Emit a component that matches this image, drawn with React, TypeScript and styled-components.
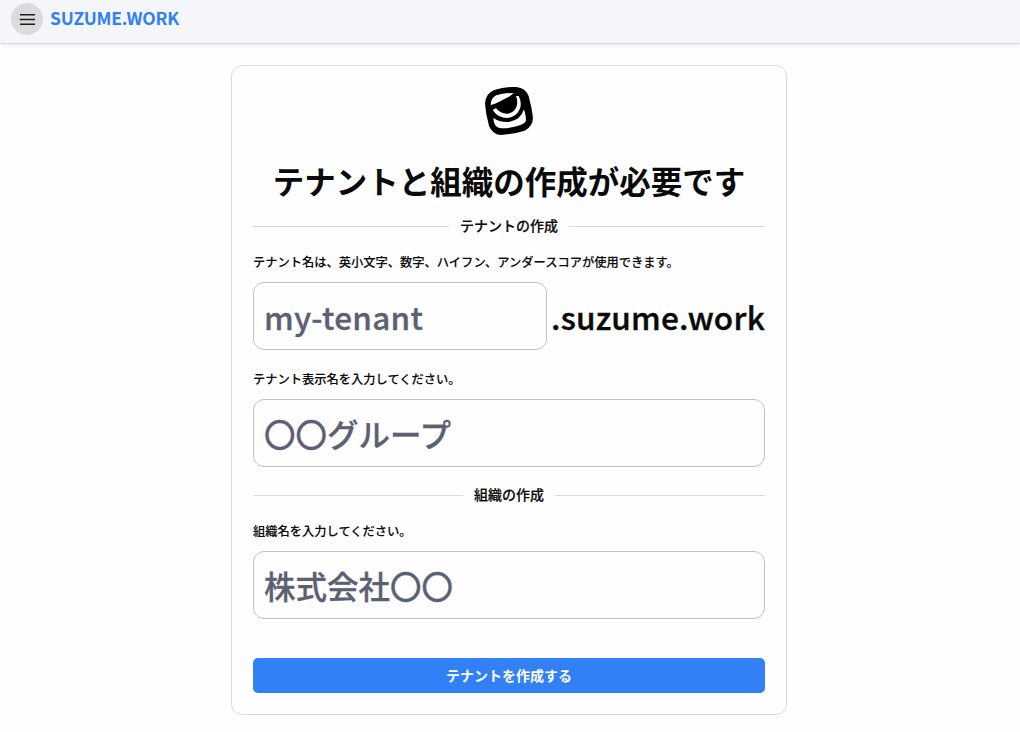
import React from "react";
import styled, { createGlobalStyle } from "styled-components";

const GlobalStyle = createGlobalStyle`
  *, *::before, *::after { box-sizing: border-box; }
  body {
    margin: 0;
    background: #fefefe;
    color: #0a0a0a;
    font-family: "Noto Sans CJK JP", "Noto Sans", sans-serif;
    font-size: 14px;
    font-weight: 500;
  }
`;

const Header = styled.header`
  height: 44px;
  padding: 0 11px 6px;
  display: flex;
  align-items: center;
  gap: 7px;
  background: #f5f6fa;
  border-bottom: 1px solid #d9dadc;
  box-shadow: 0 1px 5px rgba(0, 0, 0, 0.09);
`;

const MenuButton = styled.button`
  width: 32px;
  height: 32px;
  padding: 0;
  border: 0;
  border-radius: 50%;
  background: #dadbdd;
  display: grid;
  place-items: center;
`;

const Brand = styled.span`
  padding-bottom: 1px;
  color: #3180f6;
  font-size: 17.5px;
  line-height: 26px;
  font-weight: 700;
  letter-spacing: -0.25px;
`;

const Main = styled.main`
  display: flex;
  justify-content: center;
  padding: 21px 2px 17px 0;
`;

const Card = styled.form`
  width: 556px;
  height: 650px;
  padding: 21px;
  display: flex;
  flex-direction: column;
  border: 1px solid #dbdbdb;
  border-radius: 11px;
`;

const Logo = styled.svg`
  width: 48px;
  height: 48px;
  align-self: center;
  flex: none;
`;

const Title = styled.h1`
  margin: 21px 0 0;
  font-size: 31.5px;
  line-height: 48px;
  font-weight: 700;
  text-align: center;
  white-space: nowrap;
`;

const Divider = styled.div<{ $top: number }>`
  margin-top: ${(p) => p.$top}px;
  height: 20px;
  display: flex;
  align-items: center;
  gap: 11px;

  &::before,
  &::after {
    content: "";
    flex: 1;
    height: 1px;
    background: #dcdcdc;
  }
`;

const DividerText = styled.span`
  padding-bottom: 2px;
  line-height: 20px;
  -webkit-text-stroke: 0.2px currentColor;
`;

const Hint = styled.label<{ $top: number }>`
  margin-top: ${(p) => p.$top}px;
  font-size: 12.25px;
  line-height: 18px;
  -webkit-text-stroke: 0.12px currentColor;
`;

const InputRow = styled.div`
  margin-top: 11px;
  display: flex;
  align-items: center;
  gap: 4px;
`;

const Input = styled.input`
  flex: 1;
  min-width: 0;
  height: 68px;
  padding: 0 10px 1px;
  border: 1px solid #c2c2c4;
  border-radius: 11px;
  outline: none;
  background: #fefefe;
  font: inherit;
  font-size: 31.5px;

  &::placeholder {
    color: #5b6173;
    opacity: 1;
    -webkit-text-stroke: 0.3px currentColor;
  }

  &[name="tenant"] {
    letter-spacing: 0.25px;
  }
`;

const Suffix = styled.span`
  font-size: 31.5px;
  line-height: 46px;
  letter-spacing: 0.25px;
  -webkit-text-stroke: 0.4px currentColor;
`;

const Submit = styled.button`
  margin-top: 39px;
  height: 35px;
  padding: 0 0 2px;
  border: 0;
  border-radius: 5px;
  background: #3180f6;
  color: #fff;
  font: inherit;
  font-weight: 700;
`;

export default function App() {
  return (
    <>
      <GlobalStyle />
      <Header>
        <MenuButton type="button" aria-label="menu">
          <svg width="16" height="12" viewBox="0 0 16 12" stroke="#1c1c1e" strokeWidth="1.4">
            <path d="M1 1.8h15M.7 6.5H16M1 11.2h15" />
          </svg>
        </MenuButton>
        <Brand>SUZUME.WORK</Brand>
      </Header>
      <Main>
        <Card>
          <Logo viewBox="0 0 144 144" aria-hidden="true">
            <path d="M28 9 Q60 -1 94 0 Q122 3 131 28 Q140 58 144 93 Q143 119 119 131 Q83 142 47 144 Q21 141 12 116 Q2 83 0 49 Q3 18 28 9Z" />
            <path fill="#fefefe" d="M17 54 Q18 32 34 25 Q53 18 86 18 Q73 31 57 37 Q39 47 28 51Z" />
            <path fill="#fefefe" d="M93 27 L101 27 Q112 48 104 67 Q93 91 67 93 Q39 93 23 69 L33 64 Q49 82 69 80 Q87 77 94 60 Q100 44 93 27Z" />
            <path fill="#fefefe" d="M25 93 Q45 107 72 105 Q107 99 117 67 Q125 94 122 103 Q117 114 85 120 Q58 126 43 123 Q26 118 25 93Z" />
          </Logo>
          <Title>テナントと組織の作成が必要です</Title>
          <Divider $top={12}>
            <DividerText>テナントの作成</DividerText>
          </Divider>
          <Hint $top={17}>テナント名は、英小文字、数字、ハイフン、アンダースコアが使用できます。</Hint>
          <InputRow>
            <Input name="tenant" placeholder="my-tenant" />
            <Suffix>.suzume.work</Suffix>
          </InputRow>
          <Hint $top={20}>テナント表示名を入力してください。</Hint>
          <InputRow>
            <Input placeholder="〇〇グループ" />
          </InputRow>
          <Divider $top={18}>
            <DividerText>組織の作成</DividerText>
          </Divider>
          <Hint $top={17}>組織名を入力してください。</Hint>
          <InputRow>
            <Input placeholder="株式会社〇〇" />
          </InputRow>
          <Submit type="button">テナントを作成する</Submit>
        </Card>
      </Main>
    </>
  );
}
